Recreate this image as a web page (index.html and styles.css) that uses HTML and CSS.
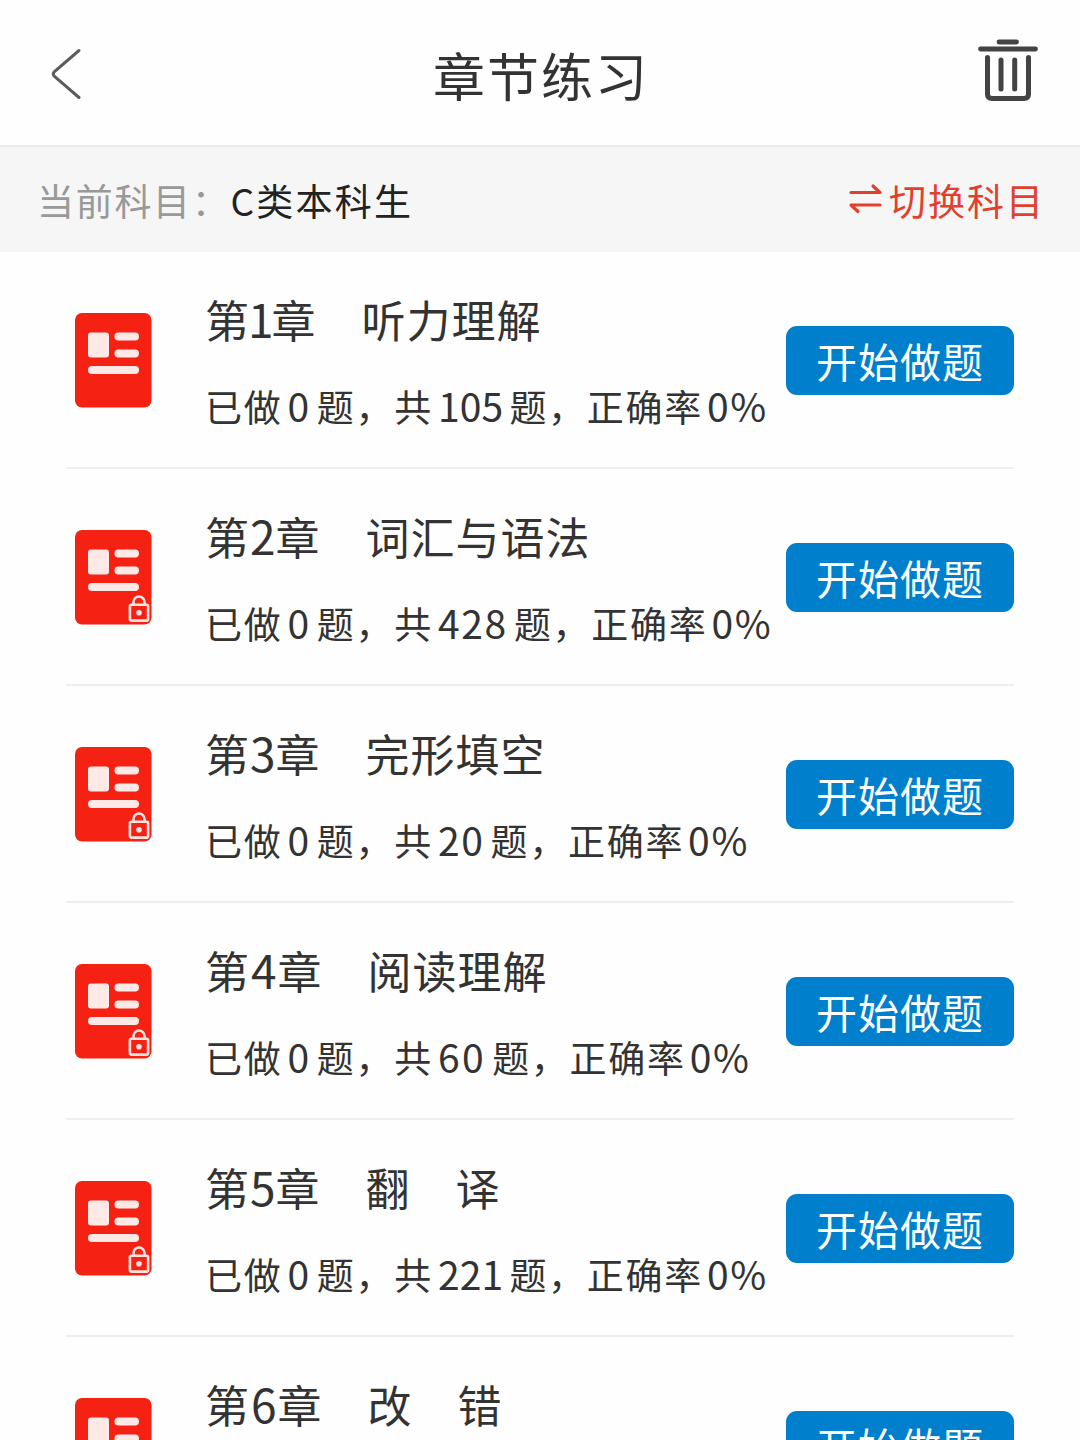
FILE: index.html
```html
<!DOCTYPE html>
<html lang="zh-CN">
<head>
  <meta charset="UTF-8">
  <title>章节练习</title>
  <link rel="stylesheet" href="styles.css">
</head>
<body>

<svg class="defs" width="0" height="0">
  <symbol id="book" viewBox="0 0 78 96">
    <rect x="1" y="1" width="76.500" height="94.500" rx="7" fill="#f52213"/>
    <rect x="14" y="20.5" width="21" height="25" rx="3" fill="#ffe9e7"/>
    <rect x="40.500" y="20.5" width="24.500" height="8" rx="4" fill="#ffe9e7"/>
    <rect x="40.500" y="37.500" width="24.500" height="8" rx="4" fill="#ffe9e7"/>
    <rect x="14" y="54" width="51" height="8" rx="4" fill="#ffe9e7"/>
  </symbol>
  <symbol id="lock" viewBox="0 0 22 28">
    <path d="M5.500 10V7a5.500 5.500 0 0 1 11 0V10" fill="none" stroke="#ffe3e0" stroke-width="2.600"/>
    <rect x="1.900" y="9.800" width="18.200" height="15.800" rx="1.500" fill="none" stroke="#ffe3e0" stroke-width="2.600"/>
    <circle cx="11" cy="17.700" r="2.800" fill="#ffe3e0"/>
  </symbol>
</svg>

<header class="header">
  <svg class="back" width="32" height="54" viewBox="0 0 32 54">
    <path d="M29 3.500 4.500 24.500Q2 27 4.500 29.500L29 50.500" fill="none" stroke="#5c5c5c" stroke-width="3" stroke-linecap="round"/>
  </svg>
  <h1 class="title">章节练习</h1>
  <svg class="trash" width="60" height="64" viewBox="0 0 60 64" fill="none" stroke="#434343" stroke-linecap="round">
    <path d="M21 3H38.500M2.500 10H57.500" stroke-width="4.800"/>
    <path d="M9.500 18.500V55Q9.500 59.500 14 59.500H46Q50.500 59.500 50.500 55V18.500" stroke-width="5"/>
    <path d="M23 21V50M36.700 21V50" stroke-width="5"/>
  </svg>
</header>

<div class="subject">
  <span class="label">当前科目：</span>
  <span class="current">C类本科生</span>
  <a class="switch">
    <svg width="34" height="32" viewBox="0 0 34 32" fill="none" stroke="#e2402f" stroke-width="3.200" stroke-linecap="round" stroke-linejoin="round">
      <path d="M2 10.500H31L24 4M31 23H2L9 29.500"/>
    </svg>
    切换科目
  </a>
</div>

<ul class="chapters">
  <li class="chapter">
    <div class="icon"><svg class="book"><use href="#book"/></svg></div>
    <div class="info">
      <h2 class="name">第<span class="no narrow">1</span>章　听力理解</h2>
      <p class="stat">已做<span class="num">0</span>题，共<span class="num narrow">105</span>题，正确率<span class="num rate">0%</span></p>
    </div>
    <a class="btn">开始做题</a>
  </li>
  <li class="chapter">
    <div class="icon"><svg class="book"><use href="#book"/></svg><svg class="lock"><use href="#lock"/></svg></div>
    <div class="info">
      <h2 class="name">第<span class="no">2</span>章　词汇与语法</h2>
      <p class="stat">已做<span class="num">0</span>题，共<span class="num">428</span>题，正确率<span class="num rate">0%</span></p>
    </div>
    <a class="btn">开始做题</a>
  </li>
  <li class="chapter">
    <div class="icon"><svg class="book"><use href="#book"/></svg><svg class="lock"><use href="#lock"/></svg></div>
    <div class="info">
      <h2 class="name">第<span class="no">3</span>章　完形填空</h2>
      <p class="stat">已做<span class="num">0</span>题，共<span class="num">20</span>题，正确率<span class="num rate">0%</span></p>
    </div>
    <a class="btn">开始做题</a>
  </li>
  <li class="chapter">
    <div class="icon"><svg class="book"><use href="#book"/></svg><svg class="lock"><use href="#lock"/></svg></div>
    <div class="info">
      <h2 class="name">第<span class="no wide">4</span>章　阅读理解</h2>
      <p class="stat">已做<span class="num">0</span>题，共<span class="num wide">60</span>题，正确率<span class="num rate">0%</span></p>
    </div>
    <a class="btn">开始做题</a>
  </li>
  <li class="chapter">
    <div class="icon"><svg class="book"><use href="#book"/></svg><svg class="lock"><use href="#lock"/></svg></div>
    <div class="info">
      <h2 class="name">第<span class="no">5</span>章　翻　译</h2>
      <p class="stat">已做<span class="num">0</span>题，共<span class="num narrow">221</span>题，正确率<span class="num rate">0%</span></p>
    </div>
    <a class="btn">开始做题</a>
  </li>
  <li class="chapter">
    <div class="icon"><svg class="book"><use href="#book"/></svg><svg class="lock"><use href="#lock"/></svg></div>
    <div class="info">
      <h2 class="name">第<span class="no wide">6</span>章　改　错</h2>
    </div>
    <a class="btn">开始做题</a>
  </li>
</ul>

</body>
</html>
```

FILE: styles.css
```css
* {
  box-sizing: border-box;
}

body,
html {
  height: 100%;
  margin: 0;
  overflow: hidden;
}

body {
  background: #fefefe;
  color: #333;
  font-family: 'Noto Sans CJK SC', sans-serif;
}

h1,
h2,
p,
ul {
  margin: 0;
  padding: 0;
  font-weight: normal;
}

.defs {
  display: block;
}

.header {
  display: flex;
  align-items: center;
  justify-content: space-between;
  height: 147px;
  padding: 0 42px 0 50px;
  border-bottom: 2px solid #ebebeb;
}

.back {
  margin-top: 3px;
}

.title {
  margin: 5px 0 0 22px;
  font-size: 52px;
  letter-spacing: 2px;
  line-height: 72px;
}

.trash {
  margin-top: -4px;
}

.subject {
  display: flex;
  align-items: center;
  height: 105px;
  padding: 0 35px 0 37px;
  background: #f6f6f6;
  font-size: 37px;
  letter-spacing: 1.700px;
  line-height: 54px;
}

.label {
  color: #999;
}

.current {
  color: #222;
  letter-spacing: 2.200px;
}

.switch {
  display: flex;
  align-items: center;
  gap: 6px;
  margin-left: auto;
  color: #e2402f;
  letter-spacing: 2px;
}

.switch svg {
  margin-top: -3px;
}

.chapters {
  padding: 0 66px;
  list-style: none;
}

.chapter {
  display: flex;
  align-items: center;
  height: 217px;
  border-bottom: 2px solid #efefef;
}

.icon {
  position: relative;
  flex: none;
  width: 78px;
  height: 96px;
  margin: 1px 53px 0 8px;
}

.book {
  display: block;
  width: 78px;
  height: 96px;
}

.lock {
  position: absolute;
  right: 2px;
  bottom: 2px;
  width: 22px;
  height: 28px;
}

.info {
  flex: 1;
  height: 100%;
  padding-top: 33px;
  white-space: nowrap;
}

.name {
  font-size: 44px;
  letter-spacing: 1px;
  line-height: 66px;
}

.no {
  margin: 0 -1px 0 0;
  font-size: 46px;
}

.no.narrow {
  margin: 0 -3px 0 -2px;
}

.no.wide {
  margin: 0 0 0 1px;
}

.stat {
  margin-top: 26px;
  font-size: 37px;
  letter-spacing: 1.700px;
  line-height: 54px;
}

.num {
  margin: 0 6px 0 5px;
  font-size: 39px;
}

/* numbers with a 1 in them sit tighter */
.num.narrow {
  letter-spacing: 0.200px;
}

.num.wide {
  letter-spacing: 2.500px;
}

.num.rate {
  margin: 0 0 0 4px;
}

.btn {
  flex: none;
  width: 228px;
  height: 69px;
  margin-top: 2px;
  border-radius: 11px;
  background: #0080cc;
  color: #fff;
  font-size: 41px;
  letter-spacing: 1px;
  line-height: 69px;
  text-align: center;
}
```
